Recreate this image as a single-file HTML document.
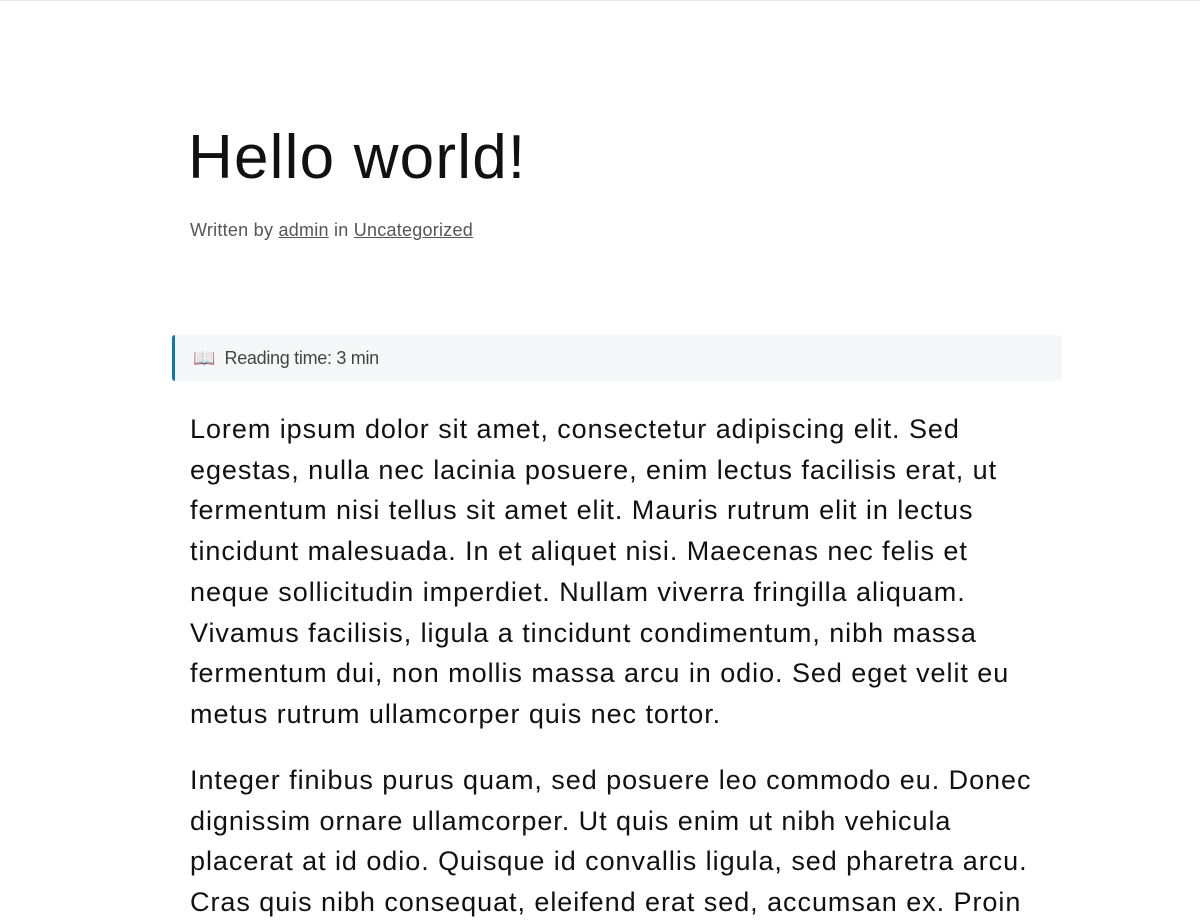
<!DOCTYPE html>
<html><head><meta charset="utf-8"><style>
html,body{margin:0;padding:0;background:#fff;width:1200px;height:900px;overflow:hidden}
body{font-family:"Liberation Sans",sans-serif;color:#111;border-top:1px solid #e5e5e5;box-sizing:border-box}
h1{position:absolute;left:188px;top:118px;margin:0;font-size:62px;font-weight:400;letter-spacing:1.2px;line-height:80px}
.meta{position:absolute;left:190px;top:220px;font-size:18px;color:#555;letter-spacing:0.25px}
.meta a{color:#555;text-decoration:underline}
.box{position:absolute;left:172px;top:335px;width:890px;height:46px;background:#f6f7f9;border-left:3px solid #0a78be;border-radius:3px;font-size:18px;color:#444;line-height:46px;box-sizing:border-box;padding-left:18px;letter-spacing:-0.3px}
.p{position:absolute;left:190px;font-size:27px;line-height:40.7px;white-space:nowrap;letter-spacing:0.95px;color:#111}
</style></head><body>
<h1>Hello world!</h1>
<div class="meta">Written by <a>admin</a> in <a>Uncategorized</a></div>
<div class="box">📖&nbsp; Reading time: 3 min</div>
<div class="p" style="top:409px">Lorem ipsum dolor sit amet, consectetur adipiscing elit. Sed<br>egestas, nulla nec lacinia posuere, enim lectus facilisis erat, ut<br>fermentum nisi tellus sit amet elit. Mauris rutrum elit in lectus<br>tincidunt malesuada. In et aliquet nisi. Maecenas nec felis et<br>neque sollicitudin imperdiet. Nullam viverra fringilla aliquam.<br>Vivamus facilisis, ligula a tincidunt condimentum, nibh massa<br>fermentum dui, non mollis massa arcu in odio. Sed eget velit eu<br>metus rutrum ullamcorper quis nec tortor.</div>
<div class="p" style="top:760px">Integer finibus purus quam, sed posuere leo commodo eu. Donec<br>dignissim ornare ullamcorper. Ut quis enim ut nibh vehicula<br>placerat at id odio. Quisque id convallis ligula, sed pharetra arcu.<br>Cras quis nibh consequat, eleifend erat sed, accumsan ex. Proin</div>
</body></html>
